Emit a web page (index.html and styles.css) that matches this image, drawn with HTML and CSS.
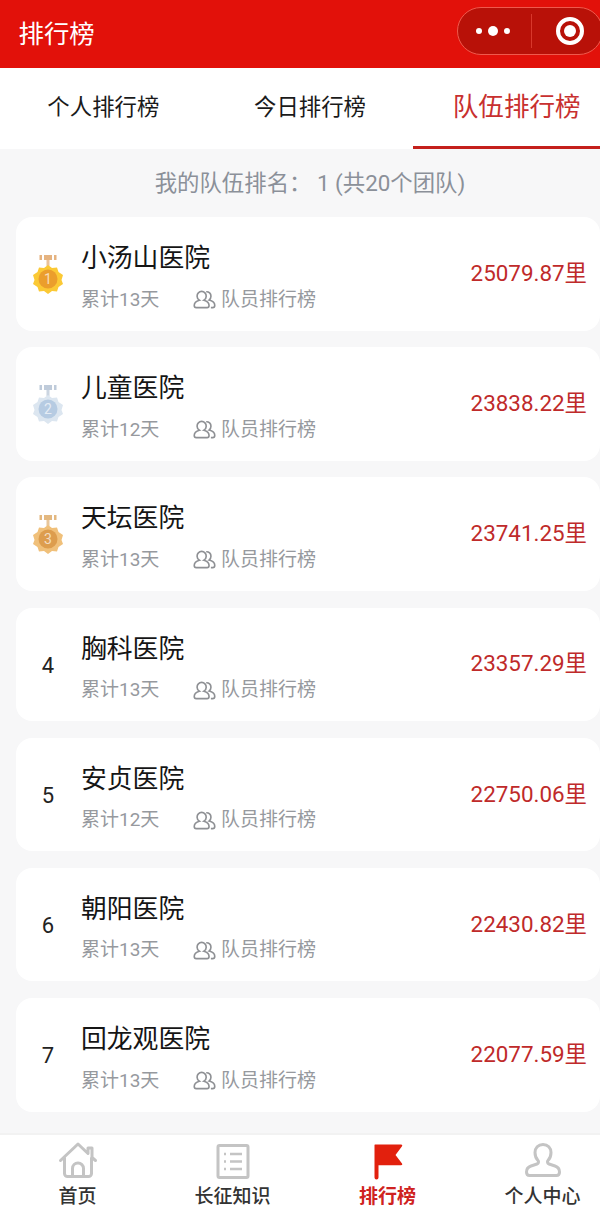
FILE: index.html
```html
<!DOCTYPE html>
<html lang="zh">
<head>
<meta charset="utf-8">
<title>排行榜</title>
<link rel="stylesheet" href="styles.css">
</head>
<body>
<div class="page">
<svg class="defs" width="0" height="0" aria-hidden="true">
  <defs>
    <symbol id="people" viewBox="0 0 24 20">
      <path d="M9 1.500a4.800 4.800 0 0 1 4.800 5c0 1.800-1 3.400-2.400 4.200 3.100.8 5.400 2.800 5.400 5.500 0 1.300-.8 2.300-2.100 2.300H3.300c-1.300 0-2.100-1-2.100-2.300 0-2.700 2.300-4.700 5.400-5.500-1.400-.8-2.400-2.400-2.400-4.200A4.800 4.800 0 0 1 9 1.500z" fill="none" stroke="currentColor" stroke-width="1.700"/>
      <path d="M13.800 1.800a4.600 4.600 0 0 1 5 4.800c0 1.800-.9 3.200-2 4 3.200.9 6 2.700 6 5.400 0 1.400-.9 2.500-2.300 2.500h-1.800" fill="none" stroke="currentColor" stroke-width="1.700"/>
    </symbol>
    <symbol id="medal" viewBox="0 0 32 40">
      <g fill="currentColor">
        <rect x="7.500" y="1" width="2.500" height="5" opacity=".75"/>
        <rect x="12" y="1" width="8" height="5" opacity=".75"/>
        <rect x="22" y="1" width="2.500" height="5" opacity=".75"/>
        <rect x="14.500" y="6" width="3" height="6" opacity=".6"/>
      </g>
      <path transform="translate(0 2)" fill="var(--star)" d="M16 9l4 3 5-.5 1.500 4.500 4.500 3-1.500 5 1.500 4-4.500 3-1.500 4.500-5-.5-4 3-4-3-5 .5-1.500-4.500-4.500-3 1.500-4-1.500-5 4.500-3 1.500-4.500 5 .5z"/>
      <circle fill="var(--core)" cx="16" cy="25" r="9.500"/>
    </symbol>
  </defs>
</svg>

<header class="topbar">
  <h1 class="topbar-title">排行榜</h1>
  <div class="capsule">
    <div class="capsule-more"><i class="dot"></i><i class="dot dot-big"></i><i class="dot"></i></div>
    <div class="capsule-sep"></div>
    <div class="capsule-close"><i class="target"></i></div>
  </div>
</header>

<nav class="tabs">
  <div class="tab">个人排行榜</div>
  <div class="tab">今日排行榜</div>
  <div class="tab tab-active">队伍排行榜</div>
</nav>

<p class="summary">我的队伍排名： 1 (共20个团队)</p>

<main class="list">
  <article class="card">
    <div class="rank rank-medal"><span class="medal medal-1"><svg width="32" height="40"><use href="#medal"/></svg><b>1</b></span></div>
    <div class="info">
      <div class="name">小汤山医院</div>
      <div class="meta"><span class="days">累计13天</span><span class="members"><svg class="people" width="23" height="19"><use href="#people"/></svg>队员排行榜</span></div>
    </div>
    <div class="distance">25079.87里</div>
  </article>
  <article class="card">
    <div class="rank rank-medal"><span class="medal medal-2"><svg width="32" height="40"><use href="#medal"/></svg><b>2</b></span></div>
    <div class="info">
      <div class="name">儿童医院</div>
      <div class="meta"><span class="days">累计12天</span><span class="members"><svg class="people" width="23" height="19"><use href="#people"/></svg>队员排行榜</span></div>
    </div>
    <div class="distance">23838.22里</div>
  </article>
  <article class="card">
    <div class="rank rank-medal"><span class="medal medal-3"><svg width="32" height="40"><use href="#medal"/></svg><b>3</b></span></div>
    <div class="info">
      <div class="name">天坛医院</div>
      <div class="meta"><span class="days">累计13天</span><span class="members"><svg class="people" width="23" height="19"><use href="#people"/></svg>队员排行榜</span></div>
    </div>
    <div class="distance">23741.25里</div>
  </article>
  <article class="card">
    <div class="rank">4</div>
    <div class="info">
      <div class="name">胸科医院</div>
      <div class="meta"><span class="days">累计13天</span><span class="members"><svg class="people" width="23" height="19"><use href="#people"/></svg>队员排行榜</span></div>
    </div>
    <div class="distance">23357.29里</div>
  </article>
  <article class="card">
    <div class="rank">5</div>
    <div class="info">
      <div class="name">安贞医院</div>
      <div class="meta"><span class="days">累计12天</span><span class="members"><svg class="people" width="23" height="19"><use href="#people"/></svg>队员排行榜</span></div>
    </div>
    <div class="distance">22750.06里</div>
  </article>
  <article class="card">
    <div class="rank">6</div>
    <div class="info">
      <div class="name">朝阳医院</div>
      <div class="meta"><span class="days">累计13天</span><span class="members"><svg class="people" width="23" height="19"><use href="#people"/></svg>队员排行榜</span></div>
    </div>
    <div class="distance">22430.82里</div>
  </article>
  <article class="card">
    <div class="rank">7</div>
    <div class="info">
      <div class="name">回龙观医院</div>
      <div class="meta"><span class="days">累计13天</span><span class="members"><svg class="people" width="23" height="19"><use href="#people"/></svg>队员排行榜</span></div>
    </div>
    <div class="distance">22077.59里</div>
  </article>
</main>

<footer class="tabbar">
  <div class="tabbar-item">
    <svg class="tabbar-icon" viewBox="0 0 40 40" width="40" height="40"><path d="M2.500 19.500L20 3l10 9.500V7h4v9.500l3.500 3M6.500 17v15.500a3 3 0 0 0 3 3h21a3 3 0 0 0 3-3V17M14.500 35v-7.500a5.500 5.500 0 0 1 11 0V35" fill="none" stroke="#c4c4c4" stroke-width="3" stroke-linejoin="round" stroke-linecap="round"/></svg>
    <span>首页</span>
  </div>
  <div class="tabbar-item">
    <svg class="tabbar-icon" viewBox="0 0 40 40" width="40" height="40"><rect x="5" y="4.500" width="30" height="32" rx="1.500" fill="none" stroke="#c4c4c4" stroke-width="3"/><path d="M11 13h2M17 13h12M11 20.500h2M17 20.500h12M11 28h2M17 28h12" stroke="#c4c4c4" stroke-width="2.500"/></svg>
    <span>长征知识</span>
  </div>
  <div class="tabbar-item tabbar-active">
    <svg class="tabbar-icon" viewBox="0 0 40 40" width="40" height="40"><path d="M7 3.500h26c1.200 0 1.600.8 1 1.700L27.500 14l6.500 8.500c.6.900.2 1.700-1 1.700H10.500v12.300a2 2 0 0 1-4 0V4a.6.600 0 0 1 .5-.5z" fill="#e2200d"/></svg>
    <span>排行榜</span>
  </div>
  <div class="tabbar-item">
    <svg class="tabbar-icon" viewBox="0 0 40 40" width="40" height="40"><path d="M20 3.500c4.800 0 8 3.500 8 8 0 3.500-1 6-3 8-1 1.200-.5 3 1 3.500l6 2c3 1 4.500 3 4.500 6 0 2-1 3.500-3 3.500H6.500c-2 0-3-1.500-3-3.500 0-3 1.500-5 4.500-6l6-2c1.500-.5 2-2.300 1-3.500-2-2-3-4.500-3-8 0-4.500 3.200-8 8-8z" fill="none" stroke="#c4c4c4" stroke-width="3"/></svg>
    <span>个人中心</span>
  </div>
</footer>
</div>
</body>
</html>
```

FILE: styles.css
```css
* { box-sizing: border-box; }
html, body { margin: 0; padding: 0; }
body {
  width: 600px;
  height: 1214px;
  overflow: hidden;
  font-family: "Roboto", "Noto Sans CJK SC", sans-serif;
  background: #f7f7f8;
}
.page {
  width: 600px;
  height: 1214px;
  display: flex;
  flex-direction: column;
  overflow: hidden;
}
.defs { position: absolute; }

.topbar {
  flex: none;
  height: 68px;
  background: #e2110a;
  display: flex;
  align-items: center;
  justify-content: space-between;
  padding-left: 18.5px;
}
.topbar-title {
  margin: 0;
  font-size: 25.4px;
  font-weight: 400;
  line-height: 30px;
  color: #fff;
}
.capsule {
  width: 146px;
  height: 48px;
  margin-right: -3px;
  margin-top: -7px;
  border: 1px solid #ef5a4d;
  border-radius: 24px;
  background: #b81108;
  display: flex;
  align-items: center;
  flex: none;
}
.capsule-more {
  width: 73px;
  display: flex;
  align-items: center;
  justify-content: center;
  gap: 6px;
  padding-right: 3px;
}
.dot { width: 6px; height: 6px; border-radius: 50%; background: #fff; }
.dot-big { width: 10px; height: 10px; }
.capsule-sep { width: 1px; height: 34px; background: #d8382c; }
.capsule-close { flex: 1; padding-left: 24px; display: flex; align-items: center; }
.target {
  width: 28px;
  height: 28px;
  border-radius: 50%;
  border: 4px solid #fff;
  display: flex;
}
.target::after {
  content: "";
  width: 12px;
  height: 12px;
  margin: 4px;
  border-radius: 50%;
  background: #fff;
}

.tabs {
  flex: none;
  height: 81px;
  width: 620px;
  background: #fff;
  display: flex;
}
.tab {
  width: 207px;
  display: flex;
  align-items: center;
  justify-content: center;
  font-size: 22.4px;
  color: #1a1a1a;
  padding-bottom: 5px;
  border-bottom: 3px solid transparent;
}
.tab-active {
  font-size: 25.6px;
  color: #c8302f;
  border-bottom-color: #c4201c;
}

.summary {
  flex: none;
  margin: 0;
  width: 620px;
  height: 68px;
  line-height: 68px;
  text-align: center;
  font-size: 22.4px;
  color: #8b9099;
}

.list {
  flex: 1;
  display: flex;
  flex-direction: column;
  gap: 16.7px;
  padding-left: 16px;
  min-height: 0;
}
.card {
  flex: none;
  height: 113.5px;
  width: 584px;
  background: #fff;
  border-radius: 16px;
  display: flex;
  align-items: center;
}
.rank {
  width: 65px;
  flex: none;
  text-align: center;
  font-size: 22px;
  color: #222;
  padding-right: 1px;
  padding-top: 2px;
}
.rank-medal { padding-top: 0; }
.medal { display: flex; justify-content: center; position: relative; }
.medal svg { display: block; }
.medal b {
  position: absolute;
  left: 0;
  right: 0;
  top: 16px;
  font-size: 14px;
  line-height: 18px;
  font-weight: 400;
  color: #fff;
  opacity: .65;
}
.medal-1 { color: #dc9a55; --star: #fbc935; --core: #eb9e2c; }
.medal-2 { color: #a9b9cd; --star: #dce6f0; --core: #b6cbe2; }
.medal-3 { color: #d9a056; --star: #f0c07a; --core: #dd9d4e; }
.info { flex: 1; min-width: 0; padding-top: 7px; }
.name {
  font-size: 25.8px;
  line-height: 34px;
  color: #151515;
  margin-top: -1px;
}
.meta {
  display: flex;
  align-items: center;
  margin-top: 11.5px;
  font-size: 19px;
  line-height: 26px;
  color: #96999e;
}
.days { width: 112px; flex: none; }
.members { display: flex; align-items: center; color: #96999e; }
.people { color: #8e9094; margin-right: 5px; flex: none; }
.distance {
  flex: none;
  padding-right: 13px;
  padding-bottom: 6px;
  font-size: 22.4px;
  color: #bf2a2a;
}

.tabbar {
  flex: none;
  height: 81px;
  width: 620px;
  background: #fff;
  border-top: 2px solid #f2f2f2;
  display: grid;
  grid-template-columns: repeat(4, 155px);
}
.tabbar-item {
  display: flex;
  flex-direction: column;
  align-items: center;
  font-size: 19px;
  font-weight: 500;
  line-height: 26px;
  color: #333;
  padding-top: 6px;
}
.tabbar-icon { display: block; margin-bottom: 3px; }
.tabbar-active { color: #cf2220; font-weight: 700; }
```
